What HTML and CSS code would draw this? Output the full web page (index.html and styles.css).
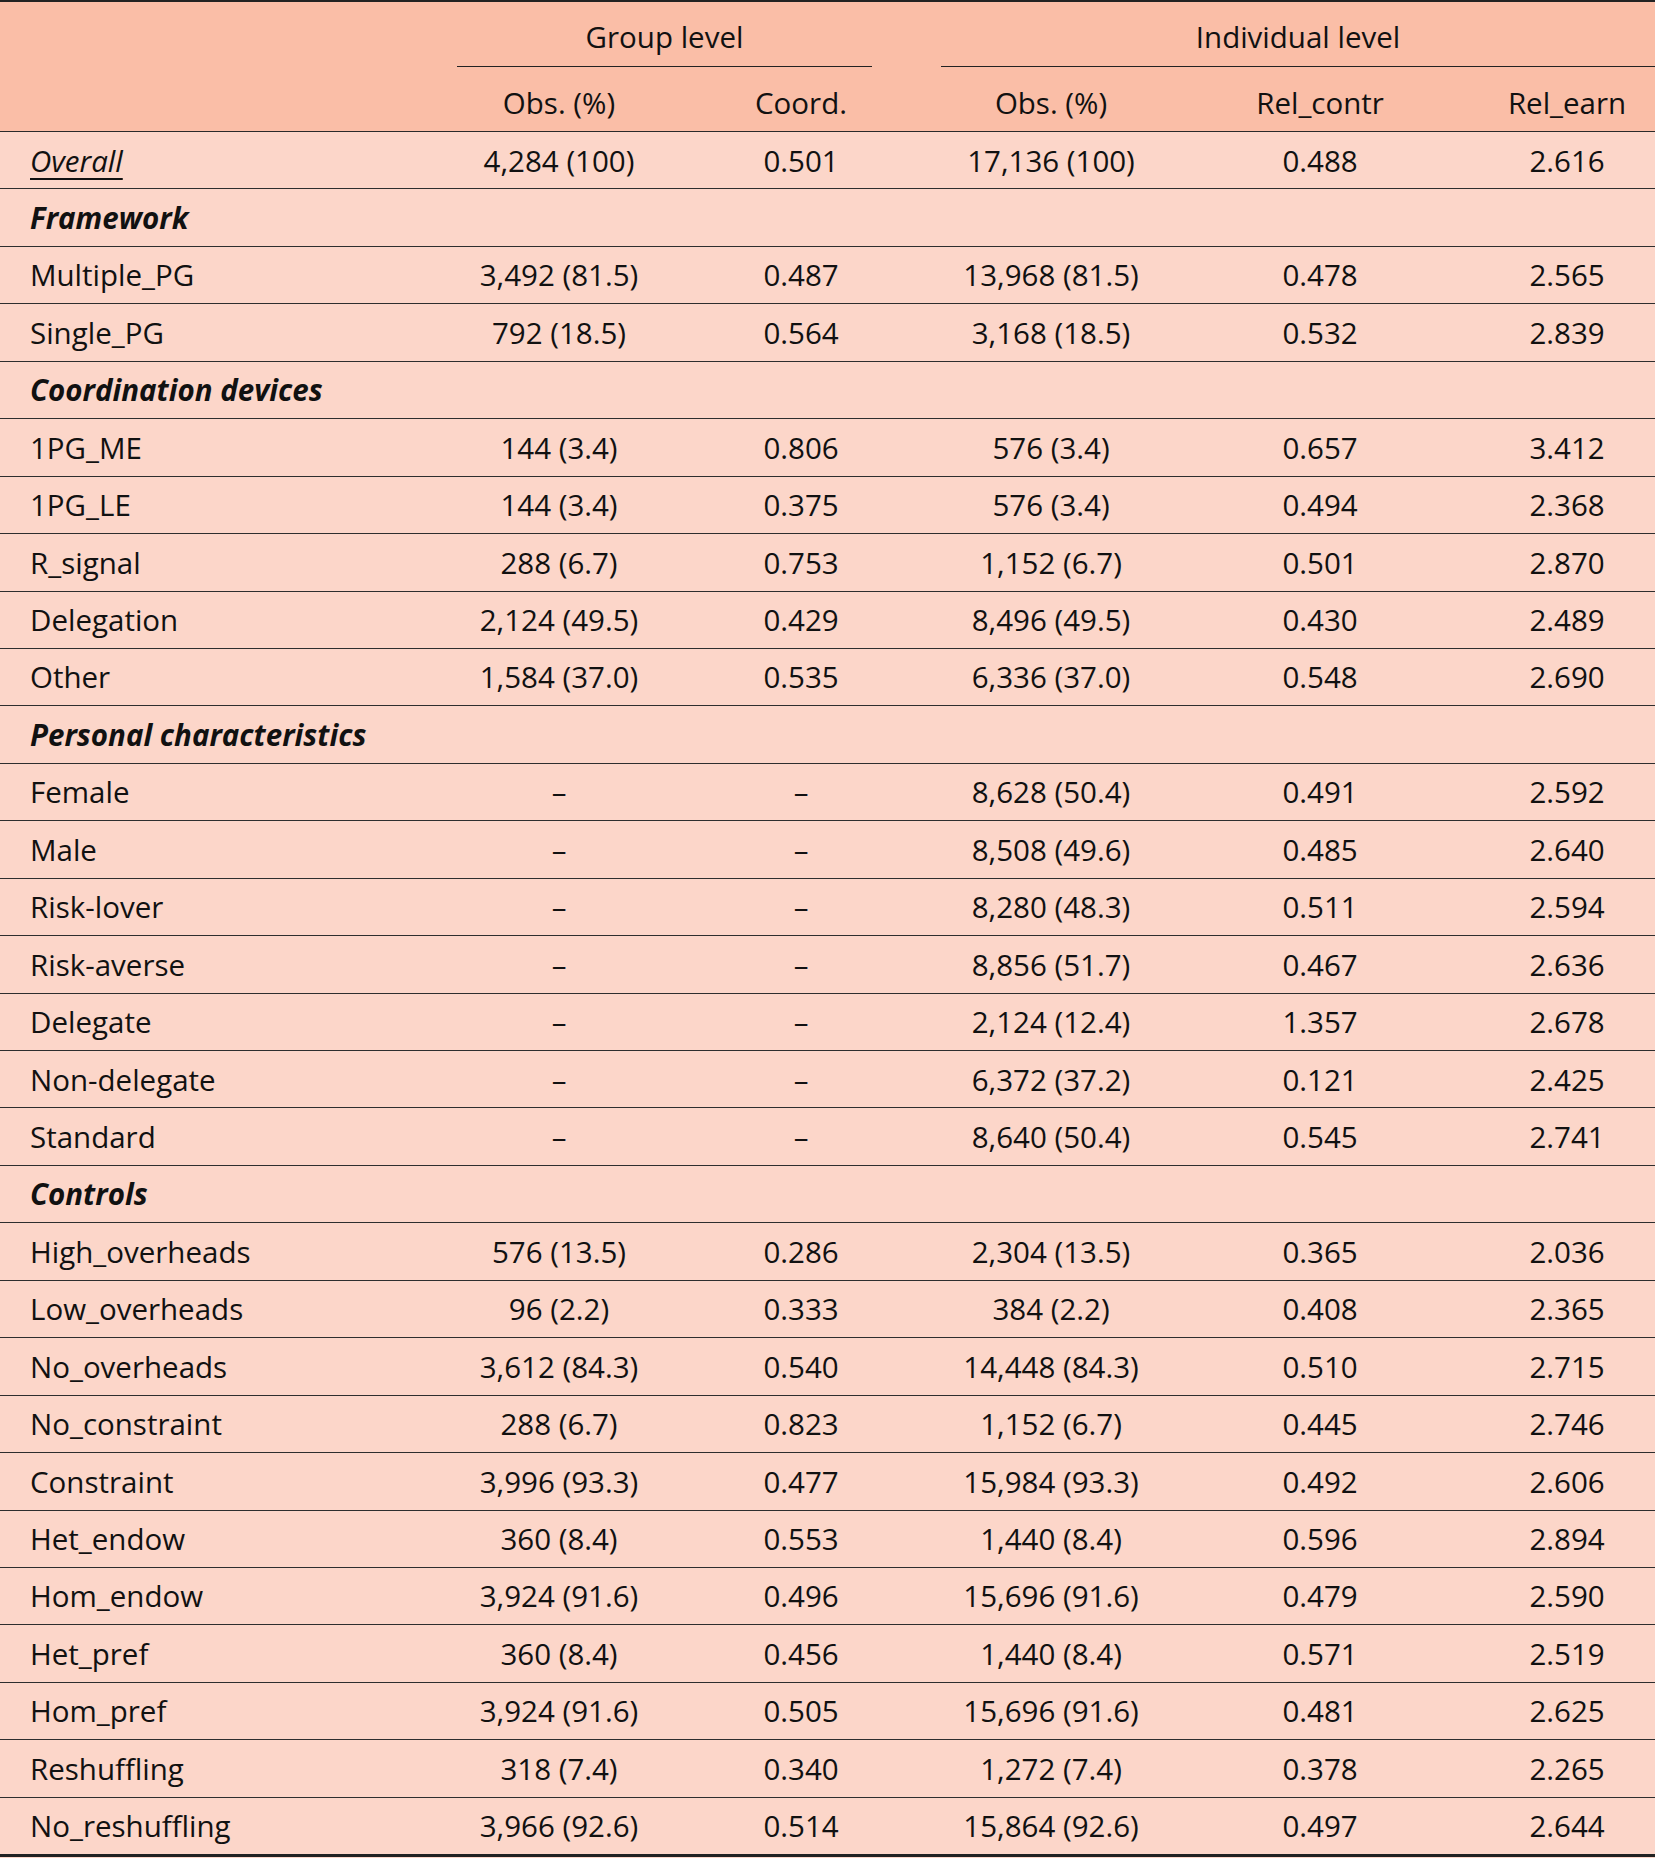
FILE: index.html
```html
<!DOCTYPE html>
<html lang="en">
<head>
<meta charset="utf-8">
<title>Descriptive statistics</title>
<link rel="stylesheet" href="styles.css">
</head>
<body>
<table class="stats">
  <colgroup>
    <col class="c1"><col class="c2"><col class="c3"><col class="c4"><col class="c5"><col class="c6">
  </colgroup>
  <thead>
    <tr class="hr1">
      <th class="blank"></th>
      <th colspan="2" class="grp"><div class="grp-label grp-group">Group level</div></th>
      <th colspan="3" class="grp"><div class="grp-label">Individual level</div></th>
    </tr>
    <tr class="hr2">
      <th class="blank"></th>
      <th>Obs. (%)</th>
      <th>Coord.</th>
      <th>Obs. (%)</th>
      <th>Rel_contr</th>
      <th>Rel_earn</th>
    </tr>
  </thead>
  <tbody>
    <tr><td class="lbl"><span class="overall">Overall</span></td><td>4,284 (100)</td><td>0.501</td><td>17,136 (100)</td><td>0.488</td><td>2.616</td></tr>
    <tr class="sec"><td class="lbl">Framework</td><td></td><td></td><td></td><td></td><td></td></tr>
    <tr><td class="lbl">Multiple_PG</td><td>3,492 (81.5)</td><td>0.487</td><td>13,968 (81.5)</td><td>0.478</td><td>2.565</td></tr>
    <tr><td class="lbl">Single_PG</td><td>792 (18.5)</td><td>0.564</td><td>3,168 (18.5)</td><td>0.532</td><td>2.839</td></tr>
    <tr class="sec"><td class="lbl">Coordination devices</td><td></td><td></td><td></td><td></td><td></td></tr>
    <tr><td class="lbl">1PG_ME</td><td>144 (3.4)</td><td>0.806</td><td>576 (3.4)</td><td>0.657</td><td>3.412</td></tr>
    <tr><td class="lbl">1PG_LE</td><td>144 (3.4)</td><td>0.375</td><td>576 (3.4)</td><td>0.494</td><td>2.368</td></tr>
    <tr><td class="lbl">R_signal</td><td>288 (6.7)</td><td>0.753</td><td>1,152 (6.7)</td><td>0.501</td><td>2.870</td></tr>
    <tr><td class="lbl">Delegation</td><td>2,124 (49.5)</td><td>0.429</td><td>8,496 (49.5)</td><td>0.430</td><td>2.489</td></tr>
    <tr><td class="lbl">Other</td><td>1,584 (37.0)</td><td>0.535</td><td>6,336 (37.0)</td><td>0.548</td><td>2.690</td></tr>
    <tr class="sec"><td class="lbl">Personal characteristics</td><td></td><td></td><td></td><td></td><td></td></tr>
    <tr><td class="lbl">Female</td><td>–</td><td>–</td><td>8,628 (50.4)</td><td>0.491</td><td>2.592</td></tr>
    <tr><td class="lbl">Male</td><td>–</td><td>–</td><td>8,508 (49.6)</td><td>0.485</td><td>2.640</td></tr>
    <tr><td class="lbl">Risk-lover</td><td>–</td><td>–</td><td>8,280 (48.3)</td><td>0.511</td><td>2.594</td></tr>
    <tr><td class="lbl">Risk-averse</td><td>–</td><td>–</td><td>8,856 (51.7)</td><td>0.467</td><td>2.636</td></tr>
    <tr><td class="lbl">Delegate</td><td>–</td><td>–</td><td>2,124 (12.4)</td><td>1.357</td><td>2.678</td></tr>
    <tr><td class="lbl">Non-delegate</td><td>–</td><td>–</td><td>6,372 (37.2)</td><td>0.121</td><td>2.425</td></tr>
    <tr><td class="lbl">Standard</td><td>–</td><td>–</td><td>8,640 (50.4)</td><td>0.545</td><td>2.741</td></tr>
    <tr class="sec"><td class="lbl">Controls</td><td></td><td></td><td></td><td></td><td></td></tr>
    <tr><td class="lbl">High_overheads</td><td>576 (13.5)</td><td>0.286</td><td>2,304 (13.5)</td><td>0.365</td><td>2.036</td></tr>
    <tr><td class="lbl">Low_overheads</td><td>96 (2.2)</td><td>0.333</td><td>384 (2.2)</td><td>0.408</td><td>2.365</td></tr>
    <tr><td class="lbl">No_overheads</td><td>3,612 (84.3)</td><td>0.540</td><td>14,448 (84.3)</td><td>0.510</td><td>2.715</td></tr>
    <tr><td class="lbl">No_constraint</td><td>288 (6.7)</td><td>0.823</td><td>1,152 (6.7)</td><td>0.445</td><td>2.746</td></tr>
    <tr><td class="lbl">Constraint</td><td>3,996 (93.3)</td><td>0.477</td><td>15,984 (93.3)</td><td>0.492</td><td>2.606</td></tr>
    <tr><td class="lbl">Het_endow</td><td>360 (8.4)</td><td>0.553</td><td>1,440 (8.4)</td><td>0.596</td><td>2.894</td></tr>
    <tr><td class="lbl">Hom_endow</td><td>3,924 (91.6)</td><td>0.496</td><td>15,696 (91.6)</td><td>0.479</td><td>2.590</td></tr>
    <tr><td class="lbl">Het_pref</td><td>360 (8.4)</td><td>0.456</td><td>1,440 (8.4)</td><td>0.571</td><td>2.519</td></tr>
    <tr><td class="lbl">Hom_pref</td><td>3,924 (91.6)</td><td>0.505</td><td>15,696 (91.6)</td><td>0.481</td><td>2.625</td></tr>
    <tr><td class="lbl">Reshuffling</td><td>318 (7.4)</td><td>0.340</td><td>1,272 (7.4)</td><td>0.378</td><td>2.265</td></tr>
    <tr class="last"><td class="lbl">No_reshuffling</td><td>3,966 (92.6)</td><td>0.514</td><td>15,864 (92.6)</td><td>0.497</td><td>2.644</td></tr>
  </tbody>
</table>
</body>
</html>
```

FILE: styles.css
```css
html, body {
  margin: 0;
  padding: 0;
  background: #fcd6c9;
}

.stats {
  width: 1655px;
  table-layout: fixed;
  border-collapse: separate;
  border-spacing: 0;
  border-top: 2px solid #222;
  font-family: "Open Sans", "Noto Sans", sans-serif;
  font-size: 29.5px;
  color: #111;
  background: #fcd6c9;
}

.c1 { width: 457px; }
.c2 { width: 204px; }
.c3 { width: 280px; }
.c4 { width: 220px; }
.c5 { width: 318px; }
.c6 { width: 176px; }

.stats thead th {
  background: #fabea7;
  font-weight: normal;
  text-align: center;
  white-space: nowrap;
}

.hr1 th {
  padding: 0;
  vertical-align: top;
}

.grp-label {
  padding: 6.5px 0 1.5px;
  line-height: 56px;
  border-bottom: 1px solid #222;
}

.grp-group {
  margin-right: 69px;
}

.hr2 th {
  padding: 6.5px 0 0.5px;
  line-height: 57px;
  border-bottom: 1px solid #2a2a2a;
}

.stats tbody td {
  padding: 8.5px 0 7.95px;
  line-height: 40px;
  text-align: center;
  white-space: nowrap;
  border-bottom: 1px solid #2e2e2e;
}

.stats tbody td.lbl {
  text-align: left;
  padding-left: 30px;
}

.stats tbody tr.last td {
  border-bottom: 3px solid #222;
}

.overall {
  font-style: italic;
  text-decoration: underline;
  text-underline-offset: 6px;
  text-decoration-thickness: 1.5px;
}

.sec td.lbl {
  font-weight: bold;
  font-style: italic;
}
```
